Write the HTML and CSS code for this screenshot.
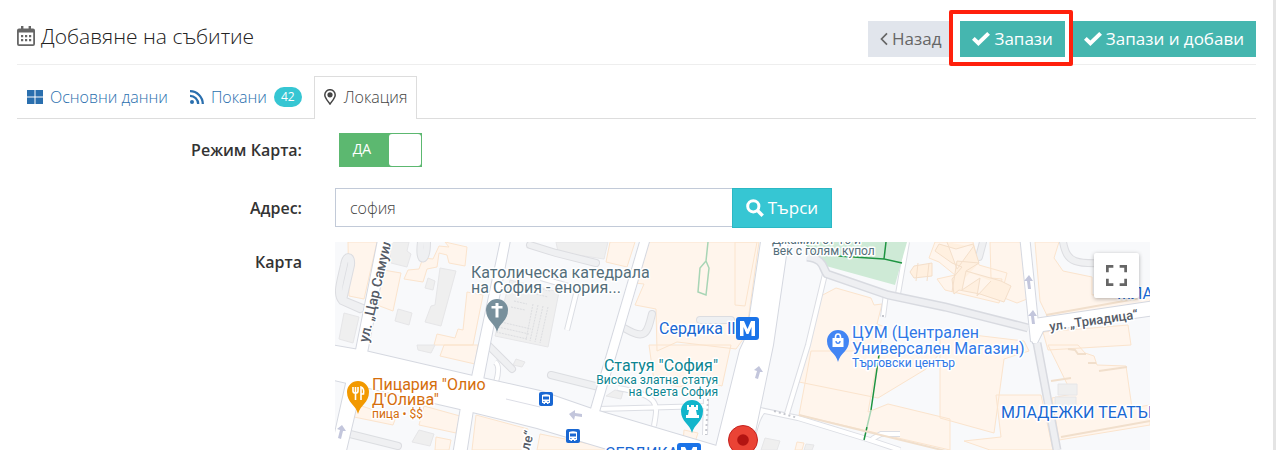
FILE: index.html
```
<!DOCTYPE html>
<html lang="bg">
<head>
<meta charset="utf-8">
<meta name="viewport" content="width=device-width, initial-scale=1">
<title>Добавяне на събитие</title>
<link rel="stylesheet" href="styles.css">
</head>
<body>
<main class="page">
  <header class="page-head">
    <h1 class="title">
      <svg class="icon-calendar" viewBox="0 0 18 20" aria-hidden="true"><path fill="currentColor" fill-rule="evenodd" d="M4 0h2.400v2.400h5.200V0H14v2.400h2a2 2 0 0 1 2 2V18a2 2 0 0 1-2 2H2a2 2 0 0 1-2-2V4.400a2 2 0 0 1 2-2h2zM1.800 6.500v11.700h14.400V6.500zM4 9h2.200v2.200H4zm4 0h2.200v2.200H8zm4 0h2.200v2.200H12zM4 13h2.200v2.200H4zm4 0h2.200v2.200H8zm4 0h2.200v2.200H12z"/></svg>
      Добавяне на събитие
    </h1>
    <div class="actions">
      <button class="btn btn-back" type="button"><svg class="icon-chevron" viewBox="0 0 8 13" aria-hidden="true"><path d="M7 .8 1.500 6.500 7 12.200" fill="none" stroke="currentColor" stroke-width="1.700"/></svg>Назад</button>
      <button class="btn btn-save highlighted" type="submit" form="event-form"><svg class="icon-check" viewBox="0 0 18 14" aria-hidden="true"><path fill="currentColor" d="M0 7.700 2.700 5l3.700 3.600L15.200 0 18 2.700 6.400 14z"/></svg>Запази</button>
      <button class="btn btn-save" type="submit" form="event-form"><svg class="icon-check" viewBox="0 0 18 14" aria-hidden="true"><path fill="currentColor" d="M0 7.700 2.700 5l3.700 3.600L15.200 0 18 2.700 6.400 14z"/></svg>Запази и добави</button>
    </div>
  </header>

  <nav class="tabs">
    <a class="tab" href="#basic"><svg class="icon-tab" viewBox="0 0 16 14" aria-hidden="true"><path fill="currentColor" d="M0 0h7.500v6.500H0zM8.500 0H16v6.500H8.500zM0 7.500h7.500V14H0zM8.500 7.500H16V14H8.500z"/></svg>Основни данни</a>
    <a class="tab" href="#invites"><svg class="icon-rss" viewBox="0 0 14 14" aria-hidden="true"><circle cx="2" cy="12" r="2" fill="currentColor"/><path d="M0 5.800A8.200 8.200 0 0 1 8.200 14M0 1.200A12.800 12.800 0 0 1 12.800 14" fill="none" stroke="currentColor" stroke-width="2.300"/></svg>Покани <span class="badge">42</span></a>
    <a class="tab active" href="#location" aria-current="page"><svg class="icon-pin" viewBox="0 0 12 16" aria-hidden="true"><path d="M6 15C3.500 11.500.8 8.700.8 5.900a5.200 5.200 0 0 1 10.400 0C11.200 8.700 8.500 11.500 6 15z" fill="none" stroke="currentColor" stroke-width="1.500"/><circle cx="6" cy="5.800" r="2.600" fill="currentColor"/></svg>Локация</a>
  </nav>

  <form class="form" id="event-form">
    <label class="label label-switch" for="map-mode">Режим Карта:</label>
    <div class="field">
      <span class="switch"><input class="switch-input" type="checkbox" id="map-mode" checked><span class="switch-text">ДА</span><span class="switch-knob"></span></span>
    </div>

    <label class="label" for="address">Адрес:</label>
    <div class="field search">
      <input class="search-input" type="text" id="address" value="софия">
      <button class="btn btn-search" type="button"><svg class="icon-search" viewBox="0 0 18 18" aria-hidden="true"><circle cx="7.300" cy="7.300" r="5.600" fill="none" stroke="currentColor" stroke-width="3"/><path d="m11.500 11.500 5.200 5.200" stroke="currentColor" stroke-width="3.400"/></svg>Търси</button>
    </div>

    <span class="label">Карта</span>
    <div class="field map">
      <svg class="map-canvas" viewBox="335 242 815 208" preserveAspectRatio="xMidYMid slice" role="img" aria-label="Карта">
        <rect class="land" x="335" y="242" width="815" height="208"/>

        <g class="building">
          <path d="M348 242h29l-13 57-15-3zM383 270l18 3-8 38-16-6zM445 242l22 5-2 19-16-3-2-8-8-2-2 14-10 2-4 13-19-3 4-9 11-1 4-11 10 1 6-13 10 1zM467 292l16 3-10 50h-39l3-11 18 4 3-9 5 1zM444 345h34l-3 19-35-8zM352 403l44 14-3 8-39-8zM424 406l36 10-4 17-37-8zM436 437l15 3-2 10h-14zM476 415l52 14-5 21h-51zM540 434l70 14v2h-73zM610 242h25l-8 25-21-5zM649 242h110l-13 93-10 14-59-7-20 9-1-42-21-4 9-21-9-1zM649 345h82l-9 41-23-6-19 7-26-6zM735 242h22l-12 64-10-1zM836 288l35 10 3 7 8-1-5 20 8 3-7 25h63l-15 17-48 29-79-16 18-84zM799 415l12-64h68l-11 61 20-8 62 15v31zM935 242h38l6 23 28 8-8 30-54-13-8-11 18-4-16-13-10-4zM990 242h32l5 57-10 4-18-7 3-17-11-1zM1035 242h24l-5 16 9 13 29 6v18l42-4 16 1v13l-98 21-12-25zM1043 332l85-7 3 20-83 5zM940 334h25l59 7 5 10-25 8-10 74-54-15zM996 395h45l12 55h-63l-26-9 37-4zM1048 345h30l7 8 9 3 3 9 29 1 6 42 18-3v20l-91 15-7-42 20-4z"/>
          <path d="M797 442l7 1-2 7h-7zM684 430l14 3-4 12-11-2z"/>
        </g>
        <g class="block">
          <path d="M389 242h20l-2 9 4 3-4 13-16-4zM440 268l16 3-15 55-16-4 6-16 4-1zM428 278l7 3-2 9-8-2zM398 309l14 4-3 12-14-4zM344 313l15 4-6 26-14-4zM510 280l49 12-11 55-53-11zM556 242h52l-4 17-46-7zM419 430l15 4-4 12-18-4zM417 345h18l-4 8-13-3zM516 359l9 3-3 5-9-2zM765 438l15 3-3 9h-16zM806 444l8 1-2 5h-8zM1058 384h19v11h-19zM1055 397h21v10h-21zM615 390l8 2-2 7-15-3z"/>
        </g>

        <g class="lane-edge">
          <path d="M360 309l-18-8c-6-7-2-18 2-36 2-11 8-10 7 0l-8 35 22 9M421 242c-3 23 6 21 6 0M530 245l26 8 40 10M624 328c21 12 23 7 28-14M551 375l48 12M350 434l48 12M488 345l24 24M1063 242c4 20 10 24 55 20M979 257l4-15M700 320h31"/>
        </g>
        <g class="lane">
          <path d="M360 309l-18-8c-6-7-2-18 2-36 2-11 8-10 7 0l-8 35 22 9M421 242c-3 23 6 21 6 0M530 245l26 8 40 10M624 328c21 12 23 7 28-14M551 375l48 12M350 434l48 12M488 345l24 24M1063 242c4 20 10 24 55 20M979 257l4-15M700 320h31"/>
        </g>
        <g class="path-edge"><path d="M577 290l-10 40M541 278l34 10M598 409l110-3M618 388c45 8 39 18 36 38M706 399l-1 36M760 410l38 8 72 22 30 10M764 410c-8 8-9 22-15 40M825 274l-17 71-22 72M886 294l-3 23M907 242l-9 52M872 439l9-5h19M495 362c5 3 3 13 1 20"/></g>
        <g class="path"><path d="M577 290l-10 40M541 278l34 10M598 409l110-3M618 388c45 8 39 18 36 38M706 399l-1 36M760 410l38 8 72 22 30 10M764 410c-8 8-9 22-15 40M825 274l-17 71-22 72M886 294l-3 23M907 242l-9 52M872 439l9-5h19M495 362c5 3 3 13 1 20"/></g>

        <path class="park" d="M805 242h102l-12 43-69-19z"/>
        <path class="park-line" d="M886 242l-2 17 18 4M838 256l46 3M879 355l-8 55M867 427l-3 13M804 242l14 15"/>
        <path class="park-outline" d="M708 242l-2 19-6 7-2 24 8 3 3-27-3-7M871 410l-4 17"/>

        <defs>
          <g id="streets">
            <path d="M379 235h11l-23 118-11-3z"/>
            <path d="M330 345l35 6 108 25 67 15 52 18 128 38v8h-93l-90-27-77-19-130-30z"/>
            <path d="M347 379l15 4-17 72h-15v-20l5-2z"/>
            <path d="M502 235h9l-28 145-11-3z"/>
            <path d="M461 407l12 3-7 45h-13z"/>
            <path d="M642 235h9l-52 177-8-3z"/>
            <path d="M762 235h27l-16 110-18 87-6 23h-35l26-105 7-15z"/>
            <path d="M1020 235h9l9 88-3 20-4-2z"/>
            <path d="M1034 319l121-18v14l-112 16-6 12h-4z"/>
          </g>
        </defs>
        <use class="street-edge" href="#streets"/>
        <use class="street" href="#streets"/>
        <path class="road-edge" d="M807 257c18 2 15 11 20 17l61 21 57 12 83 21M1037 343l20 107"/>
        <path class="road" d="M807 257c18 2 15 11 20 17l61 21 57 12 83 21M1037 343l20 107"/>
        <path class="road-stop" d="M774 411l24 7M883 315v5M708 399l-2 36"/>
        <path class="shadow" d="M799 415l151 37M1061 437l89-16M1051 381l20-3M1099 371l28-4M1068 349l7 1 3 4 8 0M1088 363l8 0M1046 315l95-17"/>
        <path class="centre-line" d="M506 399l34 8"/>
        <g class="detail">
          <path d="M501 322l30 7M498 327l31 7M496 332l31 7M514 301l13 3M511 307l14 3M522 284l28 7M519 290l29 7M538 305l-8 36M543 306l-8 36M548 307l-8 36M533 304l-7 36"/>
        </g>
        <g class="facets">
          <path d="M939 244l17 5 17-5 6 19-13 8 35 10 10 5-7 16-24-8-21-4-5 4-2-15 10-12-10-4-17-12zM947 242l10 27 16-22M952 292l5-31 22 2M966 271l-4 19 18-12-3 18 14-15M914 266l18-3v13l-18 2-4-6zM918 263l-2 18M929 263l-2 18"/>
        </g>
        <g class="arrow">
          <path d="M342 425l4 6h-3l-2 8-3-1 2-8-3-1zM569 414l6-4v3l7 1v3l-7-1-1 4zM759 366l4 6h-3l-2 7-3-1 2-7-3-1zM1029 275l4 6h-3l1 8h-3l-1-8h-3zM1033 310l4 6h-3l1 8h-3l-1-8h-3z"/>
        </g>

        <g class="marker">
          <path fill="#78909c" d="M497 332c-2-9-11-11-11-22a11 11 0 0 1 22 0c0 11-9 13-11 22z"/><path fill="#fff" d="M495.500 303h3v3h4v2.500h-4v9h-3v-9h-4V306h4z"/>
          <path fill="#f29900" d="M358 414c-2-9-11-11-11-22a11 11 0 0 1 22 0c0 11-9 13-11 22z"/><path d="M353 387v4c0 3 5 3 5 0v-4M355.500 387v13M361 400v-13c3 1 3 4 2.500 7H361" fill="none" stroke="#fff" stroke-width="1.600"/>
          <path fill="#12b5cb" d="M692 433c-2-9-11-11-11-22a11 11 0 0 1 22 0c0 11-9 13-11 22z"/><path fill="#fff" d="M687 405h2v2h2v-2h3v2h2v-2h2v5h-2l1 5h2v3h-13v-3h2l1-5h-2z"/>
          <path fill="#4285f4" d="M838 362c-2-9-11-11-11-21a11 11 0 0 1 22 0c0 10-9 12-11 21z"/><path d="M832.500 338h11v9h-11z" fill="#fff"/><path d="M835.500 339v-2c0-4 5-4 5 0v2" fill="none" stroke="#fff" stroke-width="1.600"/><path d="M836 341c0 3 4 3 4 0" fill="none" stroke="#4285f4" stroke-width="1.300"/>
          <circle cx="743" cy="440" r="14.500" fill="#ea4335" stroke="#c5221f"/><circle cx="743" cy="440" r="5.800" fill="#b31412"/>
        </g>

        <g class="map-text">
          <g class="slate"><text x="471" y="278">Католическа катедрала</text><text x="471" y="293">на София - енория...</text></g>
          <g class="slate small"><text x="772" y="244">Джамия от 16 и</text><text x="773" y="255">век с голям купол</text></g>
          <g class="orange"><text x="372" y="390">Пицария "Олио</text><text x="372" y="405">Д'Олива"</text><text class="small" x="372" y="418">пица • $$</text></g>
          <g class="teal end"><text x="718" y="371">Статуя "София"</text><text class="small" x="718" y="384">Висока златна статуя</text><text class="small" x="718" y="396">на Света София</text></g>
          <g class="blue"><text x="659" y="334">Сердика II</text><text x="605" y="459">СЕРДИКА</text></g>
          <g class="place"><text x="852" y="338">ЦУМ (Централен</text><text x="852" y="354">Универсален Магазин)</text><text class="small" x="852" y="367">Търговски център</text></g>
          <g class="blue"><text x="1001" y="418">МЛАДЕЖКИ ТЕАТЪР</text><text x="1117" y="299">МЛАДЕЖКИ</text></g>
          <g class="road-name"><text class="long" transform="translate(368 343) rotate(-77)">ул. „Цар Самуил“</text><text transform="translate(1050 331) rotate(-8)">ул. „Триадица“</text><text class="end" transform="translate(534 432) rotate(-76)">Веле“</text></g>
        </g>

        <g>
          <rect x="736" y="317" width="23" height="23" rx="3" fill="#1a73e8"/><path fill="#fff" d="M740 336v-15h4l3.500 8 3.500-8h4v15h-3.500v-9l-3 7h-2l-3-7v9z"/>
          <rect x="677" y="443" width="24" height="23" rx="3" fill="#1a73e8"/><path fill="#fff" d="M681 460v-13h4l4 8 4-8h4v13z"/>
          <g id="bus"><rect x="539" y="392" width="14" height="14" rx="2" fill="#1967d2"/><path fill="#fff" fill-rule="evenodd" d="M542 395q4-1.500 8 0v8h-1.500v1H547v-1h-2v1h-1.500v-1H542zM543 396.500v3h6v-3zM543.300 401h1.200v1h-1.200zM547.500 401h1.200v1h-1.200z"/></g>
          <use href="#bus" x="27" y="37"/>
        </g>
      </svg>
      <button class="fullscreen" type="button" aria-label="Цял екран"><svg class="icon-full" viewBox="0 0 20 20" aria-hidden="true"><path d="M1.300 7V1.300H7M13 1.300h5.700V7M18.700 13v5.700H13M7 18.700H1.300V13" fill="none" stroke="currentColor" stroke-width="2.600"/></svg></button>
    </div>
  </form>
</main>
</body>
</html>
```
FILE: styles.css
```
* { box-sizing: border-box; }

body {
  margin: 0;
  background: #fff;
  color: #333;
  font-family: "Open Sans", sans-serif;
  font-size: 16px;
  line-height: 24px;
}

svg { display: block; flex: none; }

.page {
  padding: 13px 17px 0;
  border-right: 3px solid #e4e4e4;
}

.page-head {
  display: flex;
  justify-content: space-between;
  align-items: flex-start;
  padding: 8px 0 7px;
  border-bottom: 1px solid #eee;
}

.title {
  display: flex;
  align-items: center;
  gap: 6px;
  margin: 0;
  color: #222;
  font-size: 21px;
  font-weight: 300;
  line-height: 30px;
}

.icon-calendar { width: 18px; height: 20px; color: #666; }

.actions { display: flex; gap: 7px; }

.btn {
  display: flex;
  align-items: center;
  gap: 4px;
  height: 36px;
  padding: 0 12px;
  border: 0;
  color: #fff;
  font: inherit;
  font-size: 17px;
}

.btn-back { background: #e1e5ec; color: #666; }
.btn-save { background: #45b6af; }
.icon-chevron { width: 8px; height: 14px; }
.icon-check { width: 18px; height: 14px; }

.highlighted { position: relative; }
.highlighted::after {
  content: "";
  position: absolute;
  z-index: 1;
  inset: -11px -8px -9px -11px;
  border: 4px solid #ff200c;
  border-radius: 2px;
}

.tabs {
  display: flex;
  gap: 2px;
  margin-top: 11px;
  border-bottom: 1px solid #ddd;
}

.tab {
  display: flex;
  align-items: center;
  gap: 7px;
  height: 43px;
  margin-bottom: -1px;
  padding: 0 9px 2px;
  border: 1px solid transparent;
  border-bottom: 0;
  color: #2a6fae;
  font-weight: 300;
  text-decoration: none;
}

.tab.active {
  gap: 8px;
  border-color: #ddd;
  background: #fff;
  color: #444;
}

.icon-tab { width: 16px; height: 14px; }
.icon-rss { width: 14px; height: 14px; }
.icon-pin { width: 12px; height: 16px; }

.badge {
  padding: 0 7px;
  border-radius: 10px;
  background: #36c6d3;
  color: #fff;
  font-size: 12px;
  font-weight: 400;
  line-height: 20px;
}

.form {
  display: grid;
  grid-template-columns: minmax(0, 285fr) minmax(0, 815fr);
  column-gap: 33px;
  row-gap: 14px;
  padding: 14px 106px 0 0;
}

.label {
  padding-top: 8px;
  font-weight: 600;
  text-align: right;
}

.label-switch { padding-top: 5px; }

.switch {
  position: relative;
  display: flex;
  width: 83px;
  height: 34px;
  margin: 0 0 7px 4px;
  padding: 1px;
  background: #5cb870;
}

.switch-input {
  position: absolute;
  inset: 0;
  width: 100%;
  height: 100%;
  margin: 0;
  opacity: 0;
}

.switch-text {
  flex: 1;
  padding-right: 5px;
  color: #fff;
  font-size: 14px;
  line-height: 30px;
  text-align: center;
}

.switch-knob { width: 32px; border-radius: 3px; background: #fff; }

.search { display: flex; width: 61%; height: 40px; }

.search-input {
  flex: 1;
  min-width: 0;
  height: 39px;
  padding: 0 14px;
  border: 1px solid #c2cad8;
  border-right: 0;
  color: #444;
  font: inherit;
  font-weight: 300;
}

.btn-search {
  height: 40px;
  padding: 0 13px;
  border: 1px solid #2bb8c4;
  background: #36c6d3;
}

.icon-search { width: 18px; height: 18px; }

.map { position: relative; overflow: hidden; }
.map-canvas { width: 100%; height: 208px; }

.fullscreen {
  position: absolute;
  top: 11px;
  right: 11px;
  display: grid;
  place-items: center;
  width: 45px;
  height: 45px;
  padding: 0;
  border: 0;
  border-radius: 2px;
  background: #fff;
  box-shadow: 0 1px 4px rgba(0, 0, 0, 0.3);
  color: #666;
}

.icon-full { width: 21px; height: 21px; }

.land { fill: #f8f9fb; }
.building { fill: #fff5ec; stroke: #fbe4cd; }
.block { fill: #efefef; stroke: #e6e6e8; }
.lane-edge { fill: none; stroke: #dcdde1; stroke-width: 8; stroke-linecap: round; }
.lane { fill: none; stroke: #eff0f2; stroke-width: 6; stroke-linecap: round; }
.path-edge { fill: none; stroke: #dcdee4; stroke-width: 6; }
.path { fill: none; stroke: #fff; stroke-width: 4; }
.park { fill: #ceead6; }
.park-line { fill: none; stroke: #1e9441; stroke-width: 1.5; }
.park-outline { fill: none; stroke: #a8d5b5; stroke-width: 1.5; }
.street-edge { fill: #fff; stroke: #d5d8e0; stroke-width: 2; }
.street { fill: #fff; }
.road-edge { fill: none; stroke: #d8dae0; stroke-width: 9; }
.road { fill: none; stroke: #eeeff2; stroke-width: 6; }
.road-stop { fill: none; stroke: #c5c7ce; stroke-width: 2; stroke-dasharray: 2 3; }
.centre-line { stroke: #dcdee6; }
.shadow { fill: none; stroke: #f1dfcc; stroke-width: 2; }
.detail { fill: none; stroke: #dcdde0; stroke-dasharray: 2 1; }
.facets { fill: #fff0e0; stroke: #f4dfca; }
.arrow { fill: #c3c6dc; }

.map-text {
  font-family: Roboto, sans-serif;
  font-size: 16px;
  paint-order: stroke;
  stroke: #fff;
  stroke-width: 3px;
  stroke-linejoin: round;
}

.map-text .small { font-size: 12px; }
.map-text .end { text-anchor: end; }
.slate { fill: #546e7a; }
.orange { fill: #d56e0c; }
.teal { fill: #0c8591; }
.blue { fill: #1967d2; }
.place { fill: #3078e6; }
.road-name { fill: #555b66; font-size: 13px; font-weight: 500; }
.road-name .long { font-size: 14px; }
```
